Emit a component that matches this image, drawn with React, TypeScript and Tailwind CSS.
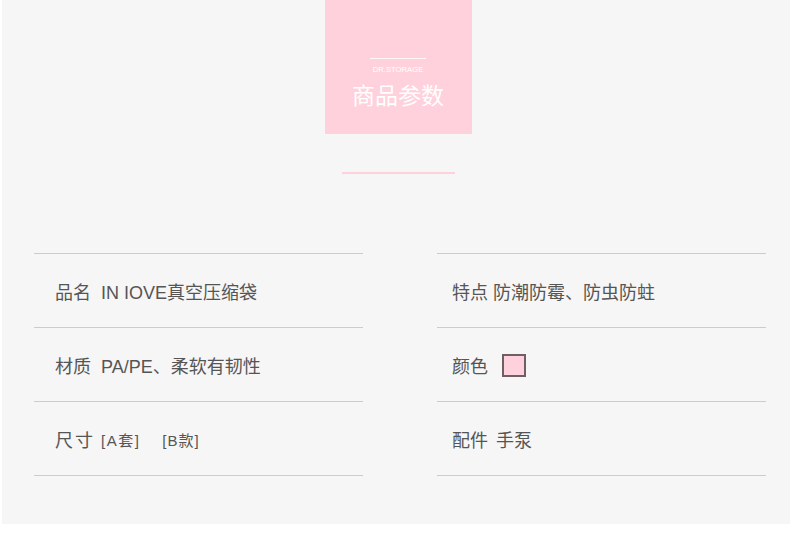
export default function App() {
  const font = { fontFamily: '"Liberation Sans", "Noto Sans CJK SC", sans-serif' };
  const Row = ({ children, right }: { children: React.ReactNode; right?: boolean }) => (
    <div className={`h-[74px] border-b border-[#cccccc] flex items-center pt-[6px] text-[18px] text-[#555] ${right ? "pl-[15px]" : "pl-[21px]"}`}>
      {children}
    </div>
  );
  return (
    <div className="w-[790px] h-[540px] bg-white" style={font}>
      <div className="ml-[2px] w-[788px] h-[524px] bg-[#f6f6f6] flex flex-col items-center">
        <div className="w-[147px] h-[134px] bg-[#ffd1dc] flex flex-col items-center pt-[58px] ml-[4px]">
          <div className="w-[56px] h-[1px] bg-white/80" />
          <div className="text-[7.7px] leading-none mt-[7px] text-white">DR.STORAGE</div>
          <div className="text-[23px] leading-none mt-[9px] text-white" style={{ fontFamily: '"Noto Sans CJK SC", sans-serif' }}>商品参数</div>
        </div>
        <div className="w-[113px] h-[2px] bg-[#ffd1dc] mt-[38px] ml-[5px]" />
        <div className="w-full grid grid-cols-2 gap-x-[74px] pl-[32px] pr-[24px] mt-[79px]">
          <div className="border-t border-[#cccccc]">
            <Row>品名<span className="ml-[10px]">IN IOVE真空压缩袋</span></Row>
            <Row>材质<span className="ml-[10px]">PA/PE、柔软有韧性</span></Row>
            <Row>
              <span className="tracking-[2px]">尺寸</span>
              <span className="ml-[6px] text-[15px] tracking-[1.5px]">[A套]</span>
              <span className="ml-[22px] text-[15px] tracking-[1px]">[B款]</span>
            </Row>
          </div>
          <div className="border-t border-[#cccccc]">
            <Row right>特点<span className="ml-[5px]">防潮防霉、防虫防蛀</span></Row>
            <Row right>
              颜色
              <span className="ml-[14px] -mt-[5px] w-[24px] h-[23px] bg-[#ffd1dc] border-2 border-[#6d5f63] inline-block" />
            </Row>
            <Row right>配件<span className="ml-[8px]">手泵</span></Row>
          </div>
        </div>
      </div>
    </div>
  );
}
